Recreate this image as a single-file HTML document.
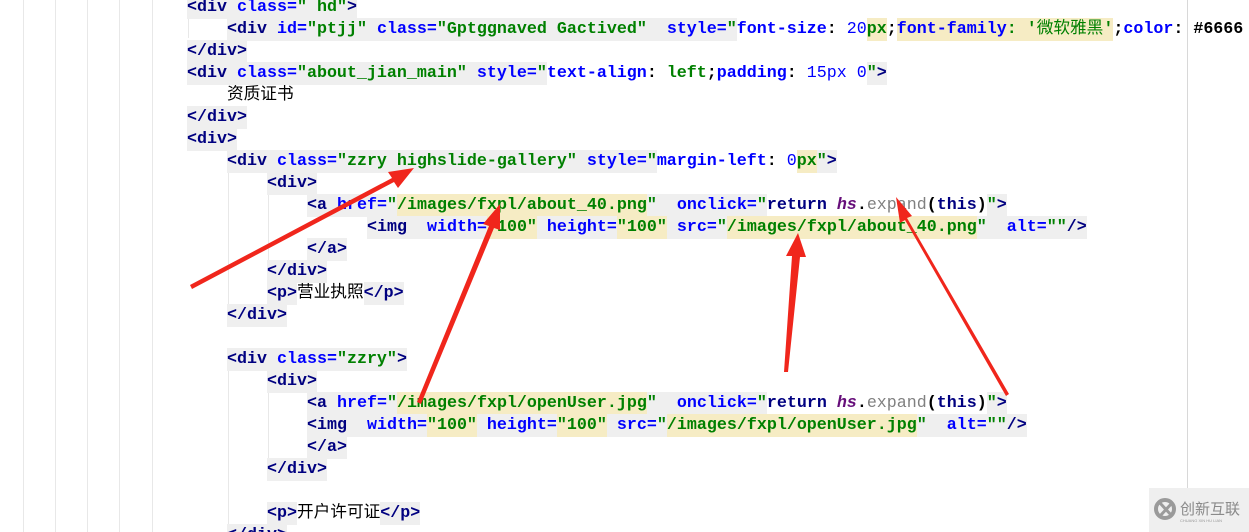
<!DOCTYPE html>
<html><head><meta charset="utf-8">
<style>
html,body{margin:0;padding:0;background:#fff;width:1249px;height:532px;overflow:hidden;position:relative}
#w{position:absolute;left:0;top:2px;width:1249px;height:540px}
.l{position:absolute;height:22px;line-height:22px;font-family:"Liberation Mono","Noto Sans CJK SC",monospace;font-size:16.67px;white-space:pre;font-weight:bold;color:#000}
.l span{padding:2px 0}
.t{color:#000080;background:#efefef}
.a{color:#0000ff;background:#efefef}
.v{color:#008000;background:#efefef}
.vy{color:#008000;background:#f6ecc4}
.ay{color:#0000ff;background:#f6ecc4}
.n{color:#0000ff}
.k{color:#000080}
.i{color:#660e7a;font-style:italic}
.gr{color:#808080;font-weight:normal}
.cn{font-weight:normal;font-family:"Liberation Mono","Noto Sans CJK SC",monospace}
.vl{position:absolute;top:0;width:1px;height:532px;background:#e8e8e8}
</style></head><body>
<div class="vl" style="left:23px"></div>
<div class="vl" style="left:55px"></div>
<div class="vl" style="left:87px"></div>
<div class="vl" style="left:119px"></div>
<div class="vl" style="left:152px"></div>
<div class="vl" style="left:1187px;background:#d8d8d8"></div>
<div id="w">
<div class="vl" style="left:188px;top:16px;height:20px"></div>
<div class="vl" style="left:228px;top:170px;height:140px"></div>
<div class="vl" style="left:268px;top:192px;height:70px"></div>
<div class="vl" style="left:228px;top:368px;height:164px"></div>
<div class="vl" style="left:268px;top:390px;height:70px"></div>

<div class="l" style="left:187px;top:-5px"><span class="t">&lt;div</span><span class="a"> class=</span><span class="v">"</span><span class="v"> hd"</span><span class="t">&gt;</span></div>
<div class="l" style="left:227px;top:17px"><span class="t">&lt;div</span><span class="a"> id=</span><span class="v">"ptjj"</span><span class="a"> class=</span><span class="v">"Gptggnaved Gactived"</span><span class="a">  style=</span><span class="v">"</span><span class="n">font-size</span>: <span class="n" style="font-weight:normal">20</span><span class="vy">px</span>;<span class="ay">font-family</span><span class="vy">: </span><span class="vy">'<span class="cn">微软雅黑</span>'</span>;<span class="n">color</span>: #6666</div>
<div class="l" style="left:187px;top:39px"><span class="t">&lt;/div&gt;</span></div>
<div class="l" style="left:187px;top:61px"><span class="t">&lt;div</span><span class="a"> class=</span><span class="v">"about_jian_main"</span><span class="a"> style=</span><span class="v">"</span><span class="n">text-align</span>: <span class="v" style="background:none">left</span>;<span class="n">padding</span>: <span class="n" style="font-weight:normal">15px 0</span><span class="v">"</span><span class="t">&gt;</span></div>
<div class="l cn" style="left:227px;top:83px">资质证书</div>
<div class="l" style="left:187px;top:105px"><span class="t">&lt;/div&gt;</span></div>
<div class="l" style="left:187px;top:127px"><span class="t">&lt;div&gt;</span></div>
<div class="l" style="left:227px;top:149px"><span class="t">&lt;div</span><span class="a"> class=</span><span class="v">"zzry highslide-gallery"</span><span class="a"> style=</span><span class="v">"</span><span class="n">margin-left</span>: <span class="n" style="font-weight:normal">0</span><span class="vy">px</span><span class="v">"</span><span class="t">&gt;</span></div>
<div class="l" style="left:267px;top:171px"><span class="t">&lt;div&gt;</span></div>
<div class="l" style="left:307px;top:193px"><span class="t">&lt;a</span><span class="a"> href=</span><span class="v">"</span><span class="vy">/images/fxpl/about_40.png</span><span class="v">"</span><span class="a">  onclick=</span><span class="v">"</span><span class="k">return </span><span class="i">hs</span>.<span class="gr">expand</span>(<span class="k">this</span>)<span class="v">"</span><span class="t">&gt;</span></div>
<div class="l" style="left:367px;top:215px"><span class="t">&lt;img</span><span class="a">  width=</span><span class="vy">"100"</span><span class="a"> height=</span><span class="vy">"100"</span><span class="a"> src=</span><span class="v">"</span><span class="vy">/images/fxpl/about_40.png</span><span class="v">"</span><span class="a">  alt=</span><span class="v">""</span><span class="t">/&gt;</span></div>
<div class="l" style="left:307px;top:237px"><span class="t">&lt;/a&gt;</span></div>
<div class="l" style="left:267px;top:259px"><span class="t">&lt;/div&gt;</span></div>
<div class="l" style="left:267px;top:281px"><span class="t">&lt;p&gt;</span><span class="cn">营业执照</span><span class="t">&lt;/p&gt;</span></div>
<div class="l" style="left:227px;top:303px"><span class="t">&lt;/div&gt;</span></div>
<div class="l" style="left:227px;top:347px"><span class="t">&lt;div</span><span class="a"> class=</span><span class="v">"zzry"</span><span class="t">&gt;</span></div>
<div class="l" style="left:267px;top:369px"><span class="t">&lt;div&gt;</span></div>
<div class="l" style="left:307px;top:391px"><span class="t">&lt;a</span><span class="a"> href=</span><span class="v">"</span><span class="vy">/images/fxpl/openUser.jpg</span><span class="v">"</span><span class="a">  onclick=</span><span class="v">"</span><span class="k">return </span><span class="i">hs</span>.<span class="gr">expand</span>(<span class="k">this</span>)<span class="v">"</span><span class="t">&gt;</span></div>
<div class="l" style="left:307px;top:413px"><span class="t">&lt;img</span><span class="a">  width=</span><span class="vy">"100"</span><span class="a"> height=</span><span class="vy">"100"</span><span class="a"> src=</span><span class="v">"</span><span class="vy">/images/fxpl/openUser.jpg</span><span class="v">"</span><span class="a">  alt=</span><span class="v">""</span><span class="t">/&gt;</span></div>
<div class="l" style="left:307px;top:435px"><span class="t">&lt;/a&gt;</span></div>
<div class="l" style="left:267px;top:457px"><span class="t">&lt;/div&gt;</span></div>
<div class="l" style="left:267px;top:501px"><span class="t">&lt;p&gt;</span><span class="cn">开户许可证</span><span class="t">&lt;/p&gt;</span></div>
<div class="l" style="left:227px;top:523px"><span class="t">&lt;/div&gt;</span></div>
</div>

<svg style="position:absolute;left:0;top:0" width="1249" height="532">
<g fill="#f0261c">
<polygon points="190,285 392,178 388,172 414,168 398,188 394,182 192,289"/>
<polygon points="417,402 489,226 483,224 500,204 500,230 494,228 421,404"/>
<polygon points="784,372 792,256 786,256 798,233 806,257 800,257 788,372"/>
<polygon points="1006,396 905,220 900,223 896,197 912,216 907,218 1009,394"/>
</g>
<rect x="1149" y="488" width="100" height="44" fill="#efefef"/>
<circle cx="1165" cy="509" r="9" fill="none" stroke="#9a9a9a" stroke-width="4"/>
<path d="M1160 503 L1172 516 M1172 503 L1160 516" stroke="#9a9a9a" stroke-width="3"/>
<text x="1180" y="514" font-family="Noto Sans CJK SC,sans-serif" font-size="15" fill="#8a8a8a">创新互联</text>
<text x="1180" y="522" font-family="Liberation Sans,sans-serif" font-size="4" fill="#999">CHUANG XIN HU LIAN</text>
</svg>
</body></html>
